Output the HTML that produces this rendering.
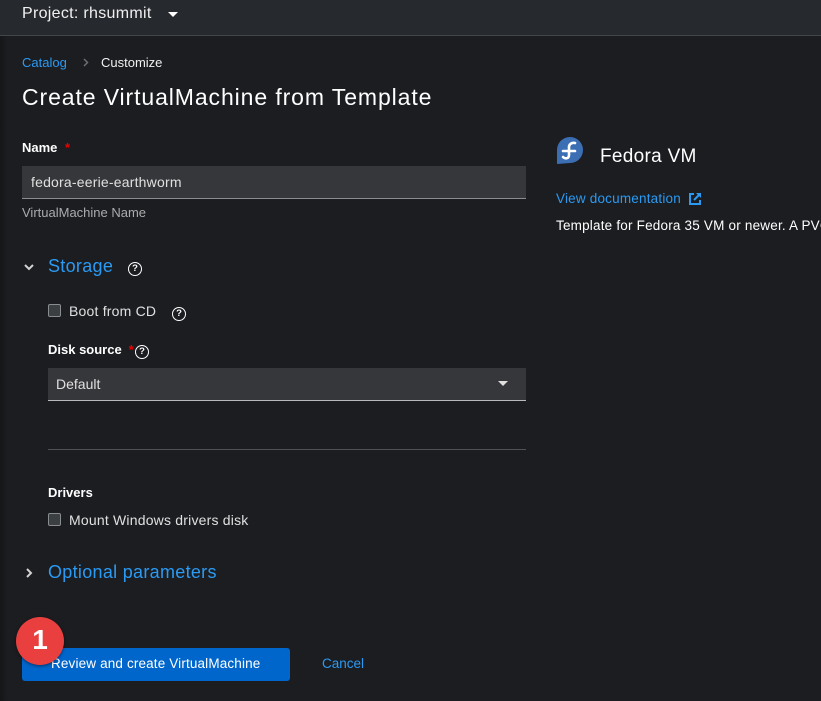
<!DOCTYPE html>
<html><head><meta charset="utf-8"><style>
*{box-sizing:border-box;margin:0;padding:0}
body{width:821px;height:701px;overflow:hidden;background:#1b1d21;font-family:"Liberation Sans",sans-serif;color:#e0e0e0;position:relative}
.a{position:absolute;white-space:nowrap}
.hdr{left:0;top:0;width:821px;height:36px;background:#26292d;border-bottom:1px solid #444548}
.lstrip{left:0;top:0;width:8px;height:701px;background:linear-gradient(90deg,#151618,#1b1d21)}
.blue{color:#2b9af3}
.q{display:inline-block;width:14px;height:14px;border:1.8px solid #fff;border-radius:50%;font-size:9.5px;font-weight:bold;text-align:center;line-height:11px;color:#fff}
.cb{width:13px;height:13px;border:1px solid #8a8d90;border-radius:2px;background:#3c3f42}
.req{color:#ee0000}
</style></head><body>
<div class="a lstrip"></div>
<div class="a hdr"></div>
<div class="a" style="left:22px;top:5px;font-size:16px;letter-spacing:0.3px;color:#f0f0f0">Project: rhsummit</div>
<div class="a" style="left:168px;top:12px;width:0;height:0;border-left:5px solid transparent;border-right:5px solid transparent;border-top:5px solid #fff"></div>

<div class="a blue" style="left:22px;top:55px;font-size:13px">Catalog</div>
<svg class="a" style="left:83px;top:58px" width="6" height="9"><path d="M1 1 L4.5 4.5 L1 8" stroke="#6a6e73" stroke-width="1.5" fill="none"/></svg>
<div class="a" style="left:101px;top:55px;font-size:13px;color:#f0f0f0">Customize</div>
<div class="a" style="left:22px;top:84px;font-size:23px;letter-spacing:0.9px;color:#fff">Create VirtualMachine from Template</div>

<div class="a" style="left:22px;top:140px;font-size:13px;font-weight:bold;color:#fff">Name <span class="req" style="margin-left:4px">*</span></div>
<div class="a" style="left:22px;top:166px;width:504px;height:33px;background:#36373a;border-bottom:1px solid #8a8d90"></div>
<div class="a" style="left:31px;top:174px;font-size:14px;letter-spacing:0.2px;color:#e0e0e0">fedora-eerie-earthworm</div>
<div class="a" style="left:22px;top:205px;font-size:13px;color:#aaabac">VirtualMachine Name</div>

<svg class="a" style="left:24px;top:263px" width="10" height="8"><path d="M1 2 L5 6 L9 2" stroke="#d2d2d2" stroke-width="2" fill="none"/></svg>
<div class="a blue" style="left:48px;top:256px;font-size:18px;letter-spacing:0.3px">Storage</div>
<div class="a" style="left:128px;top:258px"><span class="q">?</span></div>

<div class="a cb" style="left:48px;top:304px"></div>
<div class="a" style="left:69px;top:303px;font-size:14px;letter-spacing:0.2px;color:#e0e0e0">Boot from CD</div>
<div class="a" style="left:172px;top:303px"><span class="q">?</span></div>

<div class="a" style="left:48px;top:342px;font-size:13px;font-weight:bold;color:#fff">Disk source<span class="req" style="margin-left:7px">*</span></div>
<div class="a" style="left:135px;top:341px"><span class="q">?</span></div>
<div class="a" style="left:48px;top:368px;width:478px;height:33px;background:#36373a;border-bottom:1px solid #b8bbbe"></div>
<div class="a" style="left:56px;top:376px;font-size:14px;color:#e0e0e0">Default</div>
<div class="a" style="left:498px;top:381px;width:0;height:0;border-left:5px solid transparent;border-right:5px solid transparent;border-top:5px solid #e0e0e0"></div>
<div class="a" style="left:48px;top:449px;width:478px;height:1px;background:#4f5255"></div>

<div class="a" style="left:48px;top:485px;font-size:13px;font-weight:bold;color:#fff">Drivers</div>
<div class="a cb" style="left:48px;top:513px"></div>
<div class="a" style="left:69px;top:512px;font-size:14px;letter-spacing:0.2px;color:#e0e0e0">Mount Windows drivers disk</div>

<svg class="a" style="left:25px;top:568px" width="8" height="10"><path d="M2 1 L6 5 L2 9" stroke="#d2d2d2" stroke-width="2" fill="none"/></svg>
<div class="a blue" style="left:48px;top:562px;font-size:18px;letter-spacing:0.3px">Optional parameters</div>

<div class="a" style="left:22px;top:648px;width:268px;height:33px;background:#0066cc;border-radius:3px"></div>
<div class="a" style="left:51px;top:656px;font-size:13.5px;letter-spacing:0.15px;color:#fff">Review and create VirtualMachine</div>
<div class="a blue" style="left:322px;top:656px;font-size:13.5px">Cancel</div>
<div class="a" style="left:16px;top:617px;width:48px;height:48px;border-radius:50%;background:#e9403f;box-shadow:0 1px 3px rgba(0,0,0,.5);color:#fff;font-size:28px;font-weight:bold;text-align:center;line-height:46px">1</div>

<svg class="a" style="left:556px;top:137px" width="28" height="28" viewBox="0 0 28 28">
<circle cx="14" cy="13" r="13" fill="#3c6eb4"/>
<path d="M1 13 L1 27 L14 26" fill="#3c6eb4"/>
<path d="M19 6 C15 5 13 8 13 10 L13 18 C13 22 9 22 7 20 M7 14 L19 14" stroke="#fff" stroke-width="2.6" fill="none" stroke-linecap="round"/>
</svg>
<div class="a" style="left:600px;top:146px;font-size:19px;letter-spacing:0.3px;color:#fff">Fedora VM</div>
<div class="a blue" style="left:556px;top:191px;font-size:13.5px;letter-spacing:0.2px">View documentation</div>
<svg class="a" style="left:688px;top:192px" width="14" height="14" viewBox="0 0 14 14"><path d="M6 2 H2 V12 H12 V8" stroke="#2b9af3" stroke-width="2" fill="none"/><path d="M8 1 H13 V6 Z" fill="#2b9af3"/><path d="M12 2 L6 8" stroke="#2b9af3" stroke-width="2"/></svg>
<div class="a" style="left:556px;top:218px;font-size:13.5px;letter-spacing:0.2px;color:#fff">Template for Fedora 35 VM or newer. A PVC</div>
</body></html>
